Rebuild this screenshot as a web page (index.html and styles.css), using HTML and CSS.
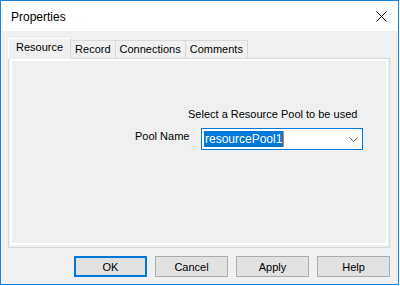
FILE: index.html
```html
<!DOCTYPE html>
<html lang="en">
<head>
    <meta charset="UTF-8">
    <title>Properties</title>
    <link rel="stylesheet" href="styles.css">
</head>
<body>
    <div class="window">
        <div class="titlebar">
            <span class="title">Properties</span>
            <svg class="close" width="11" height="11" viewBox="0 0 11 11">
                <path d="M0.5 0.5 L10.5 10.5 M10.5 0.5 L0.5 10.5" stroke="#000" stroke-width="1" fill="none"/>
            </svg>
        </div>

        <div class="tabs">
            <div class="tabstrip">
                <div class="tab active">Resource</div>
                <div class="tab">Record</div>
                <div class="tab">Connections</div>
                <div class="tab">Comments</div>
            </div>
            <div class="panel">
                <div class="page">
                    <p class="hint">Select a Resource Pool to be used</p>
                    <div class="row">
                        <label class="label">Pool Name</label>
                        <div class="combo">
                            <span class="value">resourcePool1</span><span class="caret"></span>
                            <svg class="chevron" width="9" height="6" viewBox="0 0 9 6">
                                <path d="M0.5 0.5 L4.5 4.5 L8.5 0.5" stroke="#606060" stroke-width="1" fill="none"/>
                            </svg>
                        </div>
                    </div>
                </div>
            </div>
        </div>

        <div class="buttons">
            <button class="btn default">OK</button>
            <button class="btn">Cancel</button>
            <button class="btn">Apply</button>
            <button class="btn">Help</button>
        </div>
    </div>
</body>
</html>
```

FILE: styles.css
```css
body {
    margin: 0;
    background: #ffffff;
    font-family: 'Liberation Sans', Arial, sans-serif;
    font-size: 11px;
    color: #000000;
}

.window {
    width: 399px;
    height: 285px;
    box-sizing: border-box;
    border: 1px solid #1883d7;
    background: #f0f0f0;
    display: flex;
    flex-direction: column;
}

.titlebar {
    height: 30px;
    background: #ffffff;
    display: flex;
    align-items: center;
    justify-content: space-between;
    padding: 0 11px 0 10px;
}

.title {
    font-size: 12px;
    margin-top: 1px;
}

.close {
    display: block;
}

.tabs {
    padding: 7px 8px 0 7px;
}

.tabstrip {
    display: flex;
    align-items: flex-end;
    height: 20px;
}

.tab {
    box-sizing: border-box;
    height: 18px;
    padding: 2px 4px 0 4px;
    line-height: 13px;
    border: 1px solid #d9d9d9;
    border-bottom: none;
    border-left: none;
}

.tab.active {
    height: 21px;
    margin-bottom: -1px;
    padding: 2px 7px 0 7px;
    border-top: 1px solid #ffffff;
    border-left: 1px solid #ffffff;
    border-right: 1px solid #d9d9d9;
    background: #f0f0f0;
    position: relative;
    z-index: 1;
}

.panel {
    height: 190px;
    box-sizing: border-box;
    border: 1px solid #d9d9d9;
    padding: 0 1px 2px 1px;
}

.page {
    height: 100%;
    box-sizing: border-box;
    border: 2px solid #ffffff;
    padding-top: 47px;
}

.hint {
    margin: 0 0 7px 176px;
    line-height: 13px;
}

.row {
    display: flex;
    align-items: flex-start;
    padding-left: 123px;
}

.label {
    width: 66px;
    line-height: 13px;
    margin-top: 2px;
}

.combo {
    box-sizing: border-box;
    width: 162px;
    height: 22px;
    border: 1px solid #0078d7;
    background: #ffffff;
    display: flex;
    align-items: center;
    padding-left: 2px;
}

.value {
    background: #0078d7;
    color: #ffffff;
    font-size: 12px;
    line-height: 16px;
    padding: 0 1px;
}

.caret {
    width: 1px;
    height: 16px;
    background: #e8822a;
}

.chevron {
    margin-left: auto;
    margin-right: 4px;
    margin-top: 2px;
}

.buttons {
    display: flex;
    justify-content: flex-end;
    gap: 8px;
    padding: 8px 8px 0 0;
}

.btn {
    box-sizing: border-box;
    width: 73px;
    height: 21px;
    padding: 0;
    font-family: 'Liberation Sans', Arial, sans-serif;
    font-size: 11px;
    color: #000000;
    background: #e1e1e1;
    border: 1px solid #adadad;
    border-radius: 0;
}

.btn.default {
    border: 2px solid #0078d7;
}
```
